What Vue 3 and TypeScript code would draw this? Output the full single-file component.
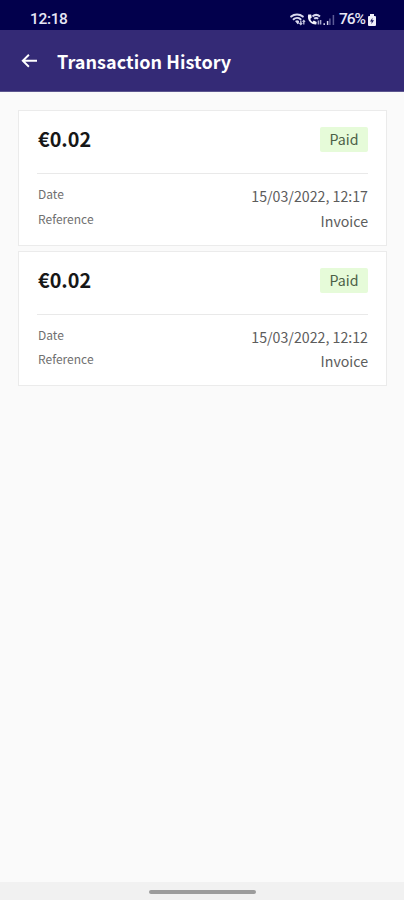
<script setup lang="ts">
interface Transaction {
  amount: string
  status: string
  date: string
  reference: string
}

const transactions: Transaction[] = [
  { amount: '€0.02', status: 'Paid', date: '15/03/2022, 12:17', reference: 'Invoice' },
  { amount: '€0.02', status: 'Paid', date: '15/03/2022, 12:12', reference: 'Invoice' },
]
</script>

<template>
  <div class="screen">
    <div class="status-bar">
      <span class="clock">12:18</span>
      <div class="indicators">
        <svg class="signals" width="45" height="16" viewBox="0 0 45 16" fill="none">
          <g stroke="#d9d9ee" stroke-width="2" stroke-linecap="round">
            <path d="M1.2 4.6C4.4 1.8 9.6 1.8 12.8 4.6" />
            <path d="M3.6 7.3C5.4 5.6 8.6 5.6 10.6 7.2" />
          </g>
          <path d="M5 9Q7.2 7.6 9 9L8.8 11.6L7.6 12.2Z" fill="#d9d9ee" />
          <path d="M10.8 12.4V8.6M9.4 11L10.8 12.6L12.2 11M13.8 12.4V8.4M12.6 9.8L13.8 8.4L15 9.8" stroke="#c2c2de" stroke-width="1.3" />
          <path d="M18.2 2.6C16.8 8.4 21 12.9 26.3 12.6L26.7 10L23.7 8.6L22.5 9.9C21.1 9.1 20.6 8.1 20.4 6.8L21.8 5.6L21.2 2.6Z" fill="#f2f2fa" />
          <path d="M22.5 4.5C24.7 2.5 27.8 2.7 30 4.5M24.2 6.8C25.3 5.8 27 5.8 28.2 6.8" stroke="#d9d9ee" stroke-width="2" />
          <path d="M28.4 12.5V8.6M30.6 12.5V8" stroke="#a5a5cb" stroke-width="1.5" />
          <path d="M34.2 13V11.2M37.6 13V9" stroke="#d8d8ec" stroke-width="1.5" />
          <path d="M39.9 13V6.4M43.4 13V3" stroke="#5c5b96" stroke-width="1.5" />
        </svg>
        <span class="charge">76%</span>
        <svg class="battery" width="10" height="14" viewBox="0 0 10 14">
          <path d="M3 1H7V3H8Q9 3 9 4V12Q9 13 8 13H2Q1 13 1 12V4Q1 3 2 3H3Z" fill="#f0f0fa" />
          <path d="M5.5 4.8L3 8.4H4.7L4.4 11L7 7.3H5.2Z" fill="#15125b" />
        </svg>
      </div>
    </div>

    <header class="app-bar">
      <svg class="back" width="18" height="18" viewBox="0 0 18 18" fill="none" stroke="#fff" stroke-width="1.9">
        <path d="M17 8.7H2.8M8.9 2.7L2.8 8.7L8.9 14.7" />
      </svg>
      <h1>Transaction History</h1>
    </header>

    <main class="list">
      <article v-for="item in transactions" :key="item.date" class="card">
        <div class="summary">
          <span class="amount">{{ item.amount }}</span>
          <span class="badge">{{ item.status }}</span>
        </div>
        <dl class="details">
          <div class="row">
            <dt>Date</dt>
            <dd>{{ item.date }}</dd>
          </div>
          <div class="row">
            <dt>Reference</dt>
            <dd>{{ item.reference }}</dd>
          </div>
        </dl>
      </article>
    </main>

    <div class="nav-bar"><span class="handle"></span></div>
  </div>
</template>

<style>
body {
  background: #fafafa;
}
</style>

<style scoped>
.screen {
  display: flex;
  flex-direction: column;
  height: 900px;
  background: #fafafa;
  font-family: "Noto Sans CJK SC", "Noto Sans", sans-serif;
}
.status-bar {
  display: flex;
  flex: none;
  justify-content: space-between;
  align-items: center;
  box-sizing: border-box;
  height: 30px;
  padding: 9px 27px 0 30px;
  background: #02004c;
  color: #e6e6f4;
  font: 500 15.5px/21px Roboto, sans-serif;
}
.clock {
  letter-spacing: -0.35px;
}
.indicators {
  display: flex;
  align-items: center;
}
.signals {
  margin-right: 4px;
}
.charge {
  letter-spacing: -1px;
}
.battery {
  margin-left: 2px;
}
.app-bar {
  display: flex;
  flex: none;
  align-items: center;
  box-sizing: border-box;
  height: 62px;
  padding-left: 20px;
  border-bottom: 1px solid #5c568f;
  background: #342a76;
}
.back {
  margin-right: 19px;
}
h1 {
  margin: 0;
  color: #fff;
  font-size: 18px;
  font-weight: 700;
  line-height: 26px;
  letter-spacing: 0.06px;
}
.list {
  display: flex;
  flex: 1;
  flex-direction: column;
  gap: 5px;
  padding: 18px 17px 0 18px;
}
.card {
  box-sizing: border-box;
  height: 135.5px;
  padding: 16px 18px 0;
  border: 1px solid #ebebeb;
  background: #fff;
}
.summary {
  display: flex;
  justify-content: space-between;
  align-items: flex-start;
  height: 46px;
  border-bottom: 1px solid #e9e9e9;
}
.amount {
  padding-left: 1px;
  color: #171717;
  font-size: 19.8px;
  font-weight: 700;
  line-height: 24px;
}
.badge {
  box-sizing: border-box;
  width: 48px;
  height: 25px;
  border-radius: 2px;
  background: #e6fbd9;
  color: #4b6046;
  font-size: 14.2px;
  line-height: 24px;
  text-align: center;
}
.details {
  margin: 0;
  padding-top: 9px;
}
.row {
  display: flex;
  justify-content: space-between;
  height: 24.5px;
}
dt {
  padding-left: 1px;
  color: #707070;
  font-size: 12px;
  line-height: 22px;
}
dd {
  margin: 0;
  color: #5c5c5c;
  font-size: 14.2px;
  line-height: 26.4px;
}
.nav-bar {
  display: flex;
  flex: none;
  justify-content: center;
  box-sizing: border-box;
  height: 18px;
  padding-top: 8px;
  background: #f1f1f1;
}
.handle {
  width: 107px;
  height: 4px;
  border-radius: 2px;
  background: #9c9c9c;
}
</style>
